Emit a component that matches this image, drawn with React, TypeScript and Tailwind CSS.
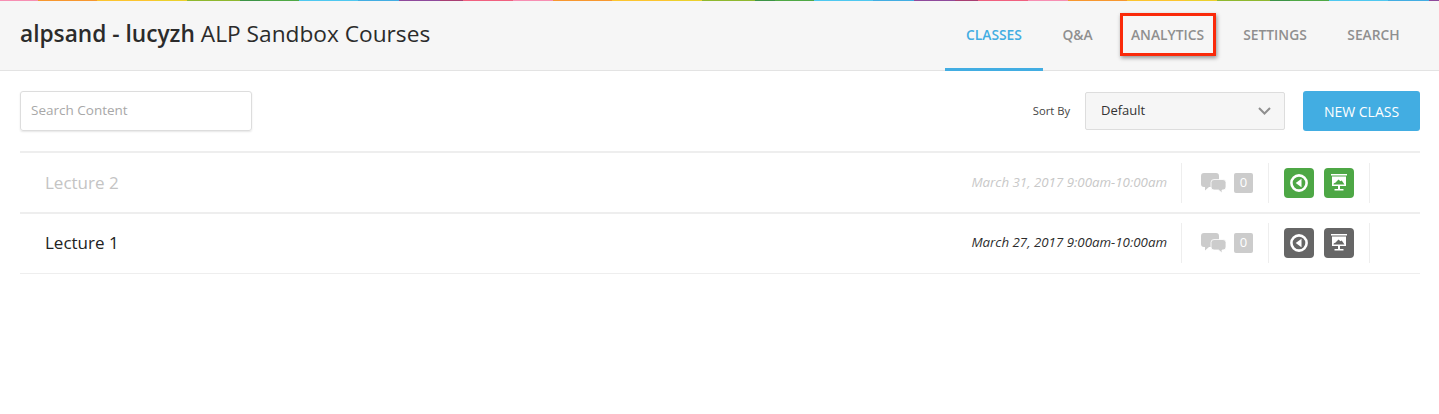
import React from "react";

const stripes = [
  ["w-[40px]", "bg-[#f78fb3]"],
  ["w-[59px]", "bg-[#f7972f]"],
  ["w-[58px]", "bg-[#fcc52f]"],
  ["w-[32px]", "bg-[#ecd02c]"],
  ["w-[53px]", "bg-[#8fb82f]"],
  ["w-[20px]", "bg-[#3c9346]"],
  ["w-[39px]", "bg-[#4fa845]"],
  ["w-[59px]", "bg-[#4fc8f0]"],
  ["w-[41px]", "bg-[#42ade2]"],
  ["w-[41px]", "bg-[#8e4a9c]"],
  ["w-[23px]", "bg-[#a83e72]"],
  ["w-[50px]", "bg-[#f0607f]"],
];

function Comments() {
  return (
    <svg width="25" height="20" viewBox="0 0 25 20" fill="#cccccc">
      <path d="M3 0h12a3 3 0 0 1 3 3v8a3 3 0 0 1-3 3H8l-4 3.500V14H3a3 3 0 0 1-3-3V3a3 3 0 0 1 3-3z" />
      <path d="M13 6.500h9a3 3 0 0 1 3 3v4.500a3 3 0 0 1-3 3h-1v3l-3.500-3H13a3 3 0 0 1-3-3V9.500a3 3 0 0 1 3-3z" stroke="#fff" strokeWidth="0.8" />
    </svg>
  );
}

function PlayBack() {
  return (
    <svg width="18" height="18" viewBox="0 0 18 18">
      <circle cx="9" cy="9" r="7.600" fill="none" stroke="#fff" strokeWidth="2.600" />
      <path d="M11.500 4.800v8.400L5.700 9z" fill="#fff" />
    </svg>
  );
}

function Slides({ bg }: { bg: string }) {
  return (
    <svg width="16" height="18" viewBox="0 0 16 18">
      <rect x="0" y="0" width="16" height="1.500" fill="#fff" />
      <rect x="1" y="2.500" width="14" height="9.500" fill="#fff" />
      <path d="M2.500 10.500c0-1 .8-1.700 1.800-1.700L7.500 5.500l2 1.800 1.200-.8 2.800 4z" fill={bg} />
      <rect x="7" y="12" width="2" height="3.500" fill="#fff" />
      <rect x="3.500" y="15" width="9" height="1.500" fill="#fff" />
    </svg>
  );
}

function Row({ title, date, time, muted, last }: { title: string; date: string; time: string; muted?: boolean; last?: boolean }) {
  const btn = muted ? "bg-[#4da745]" : "bg-[#666666]";
  return (
    <div className={`flex items-center border-t-2 border-[#eeeeee] ${last ? "h-[62px] border-b pb-px" : "h-[61px]"}`}>
      <div className={`flex-1 pl-[25px] text-[17px] ${muted ? "text-[#c4c4c4]" : "text-[#222222]"}`}>{title}</div>
      <div className={`pr-[14px] text-[13.300px] italic ${muted ? "text-[#c8c8c8]" : "text-[#2b2b2b]"}`}>
        <span className="font-medium">{date}</span> {time}
      </div>
      <div className="flex h-10 w-[87px] items-center border-l border-[#eeeeee] pl-[19px]">
        <Comments />
        <div className="ml-2 flex h-5 w-[19px] items-center justify-center rounded-[2px] bg-[#cccccc] text-[13px] text-white">0</div>
      </div>
      <div className="flex h-10 w-[102px] items-center gap-2.5 border-x border-[#eeeeee] pl-[15px]">
        <div className={`flex h-[30px] w-[30px] items-center justify-center rounded-[4px] ${btn}`}>
          <PlayBack />
        </div>
        <div className={`flex h-[30px] w-[30px] items-center justify-center rounded-[4px] ${btn}`}>
          <Slides bg={muted ? "#4da745" : "#666666"} />
        </div>
      </div>
      <div className="w-[50px]" />
    </div>
  );
}

export default function App() {
  return (
    <div className="h-[414px] w-full overflow-hidden bg-white font-['Open_Sans',sans-serif]">
      <div className="flex h-px overflow-hidden">
        {[0, 1, 2].map((n) =>
          stripes.map(([w, c], i) => (
            <div key={`${n}-${i}`} className={`shrink-0 ${w} ${c} ${n === 0 && i === 0 ? "-ml-[2px]" : ""}`} />
          ))
        )}
      </div>
      {/* Header */}
      <div className="flex h-[70px] items-stretch justify-between border-b border-[#e3e3e3] bg-[#f6f6f6] pl-5 pr-[19px]">
        <h1 className="flex items-center pb-[2px] text-[22.700px] text-[#2b2b2b]">
          <span className="font-semibold">alpsand - lucyzh</span>
          <span className="ml-[6px]">ALP Sandbox Courses</span>
        </h1>
        <nav className="flex text-[13.800px] font-semibold text-[#8f8f8f]">
          <div className="relative flex w-[98px] items-center justify-center text-[#42ade2]">
            CLASSES
            <div className="absolute bottom-[-1px] left-0 h-[3px] w-full bg-[#42ade2]" />
          </div>
          <div className="flex w-[69px] items-center justify-center">Q&amp;A</div>
          <div className="relative flex w-[111px] items-center justify-center">
            ANALYTICS
            <div className="absolute left-[8px] right-[7px] top-[12px] h-[43px] border-[3px] border-[#fa2a0a] shadow-[1px_2px_4px_rgba(0,0,0,0.4)]" />
          </div>
          <div className="flex w-[104px] items-center justify-center">SETTINGS</div>
          <div className="flex w-[93px] items-center justify-center">SEARCH</div>
        </nav>
      </div>
      {/* Toolbar */}
      <div className="flex items-center justify-between pb-5 pl-5 pr-[19px] pt-5">
        <input
          placeholder="Search Content"
          className="h-10 w-[232px] rounded-[3px] border border-[#dddddd] px-[10px] pb-[2px] text-[13.500px] shadow-[0_1px_2px_rgba(0,0,0,0.1)] outline-none placeholder:text-[#a8a8a8]"
        />
        <div className="flex items-center">
          <span className="text-[11.200px] text-[#444444]">Sort By</span>
          <div className="ml-[15px] flex h-[38px] w-[200px] items-center justify-between rounded-[2px] border border-[#dddddd] bg-[#f6f6f6] pl-[15px] pr-[13px] text-[13px] text-[#333333]">
            Default
            <svg width="13" height="8" viewBox="0 0 13 8" fill="none" stroke="#8f8f8f" strokeWidth="2">
              <path d="M1 1l5.500 5.500L12 1" />
            </svg>
          </div>
          <button className="ml-[18px] h-10 w-[117px] rounded-[3px] bg-[#42ade2] text-[14px] font-medium text-white">NEW CLASS</button>
        </div>
      </div>
      {/* Lectures */}
      <div className="ml-5 mr-[19px]">
        <Row title="Lecture 2" date="March 31, 2017" time="9:00am-10:00am" muted />
        <Row title="Lecture 1" date="March 27, 2017" time="9:00am-10:00am" last />
      </div>
    </div>
  );
}
